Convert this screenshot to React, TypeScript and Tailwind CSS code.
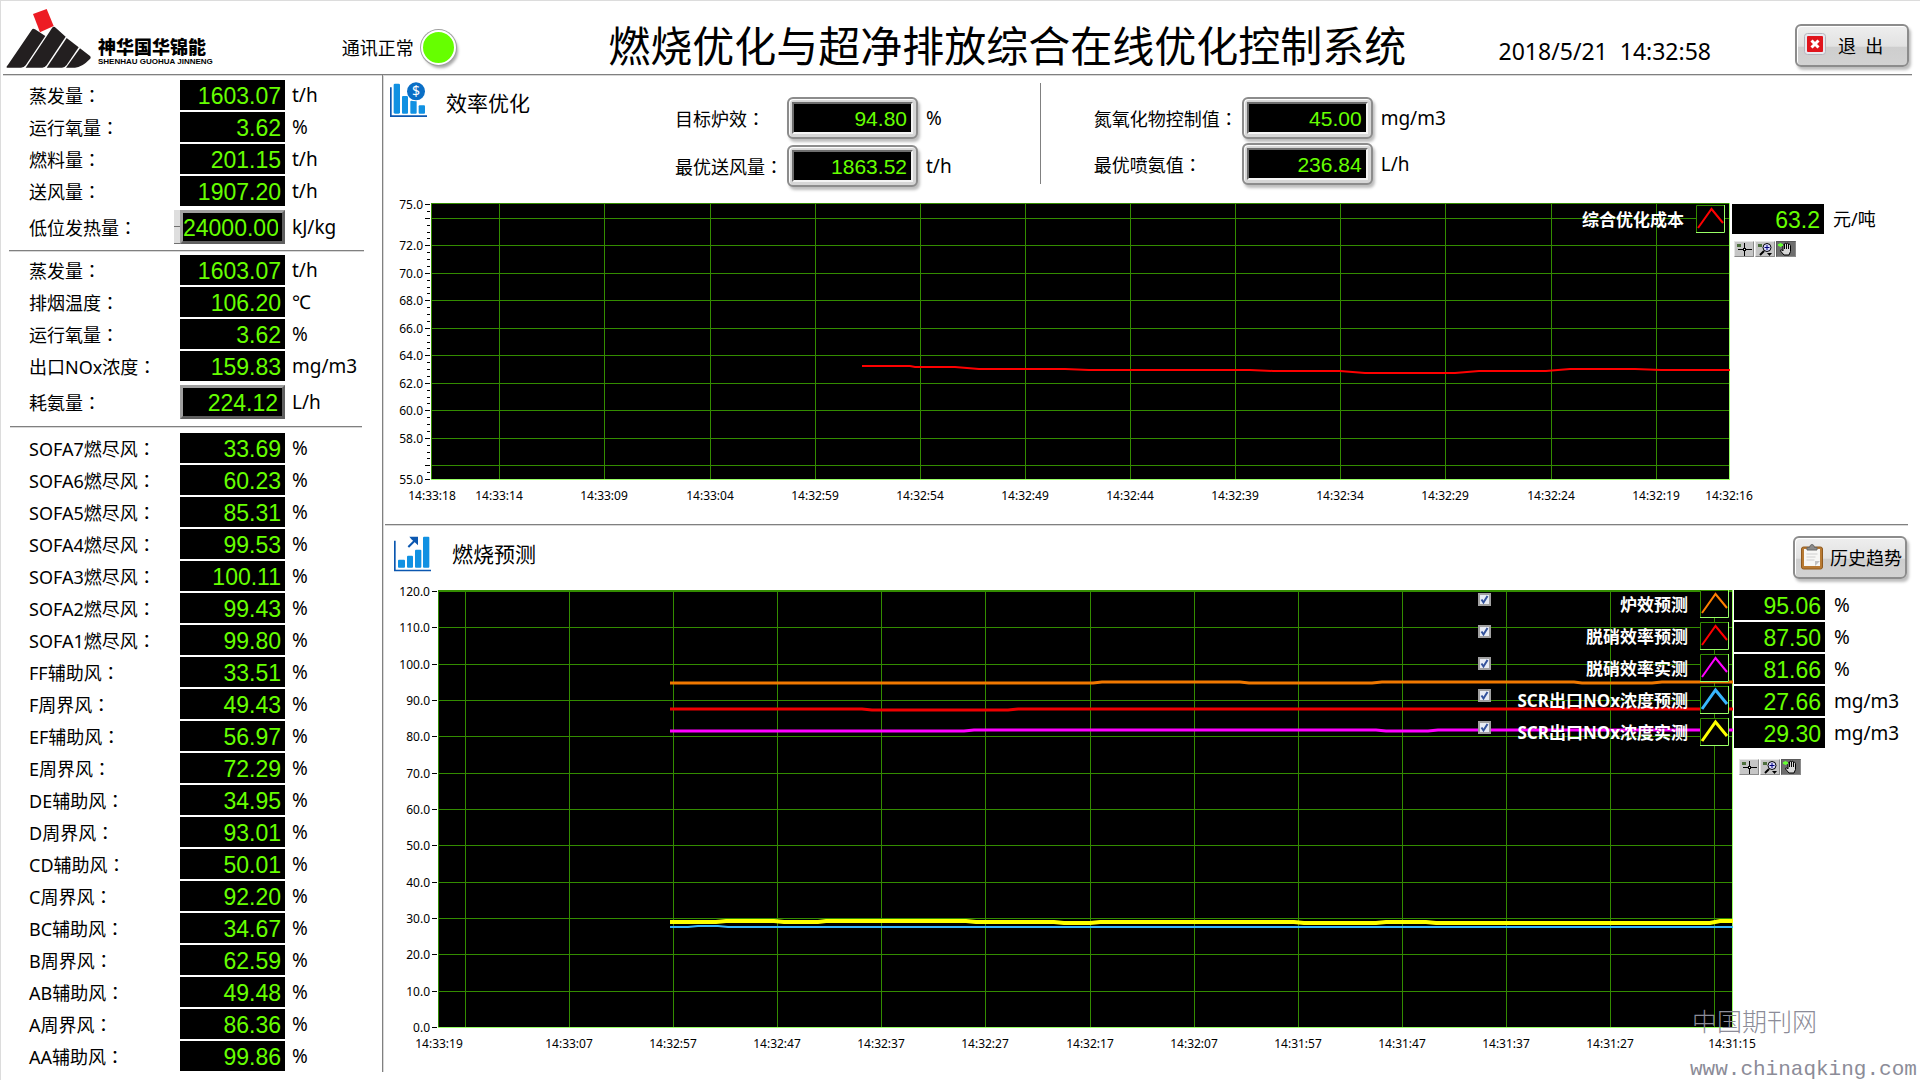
import React from 'react';
import { clsx } from 'clsx';

type Reading = { label: string; value: string; unit: string; editable?: boolean; stepper?: boolean };

type Series = { color: string; width: number; points: string };

const BOILER: Reading[] = [
  { label: '蒸发量', value: '1603.07', unit: 't/h' },
  { label: '运行氧量', value: '3.62', unit: '%' },
  { label: '燃料量', value: '201.15', unit: 't/h' },
  { label: '送风量', value: '1907.20', unit: 't/h' },
  { label: '低位发热量', value: '24000.00', unit: 'kJ/kg', editable: true, stepper: true },
];

const EMISSION: Reading[] = [
  { label: '蒸发量', value: '1603.07', unit: 't/h' },
  { label: '排烟温度', value: '106.20', unit: '℃' },
  { label: '运行氧量', value: '3.62', unit: '%' },
  { label: '出口NOx浓度', value: '159.83', unit: 'mg/m3' },
  { label: '耗氨量', value: '224.12', unit: 'L/h', editable: true },
];

const DAMPERS: Reading[] = [
  ['SOFA7燃尽风', '33.69'],
  ['SOFA6燃尽风', '60.23'],
  ['SOFA5燃尽风', '85.31'],
  ['SOFA4燃尽风', '99.53'],
  ['SOFA3燃尽风', '100.11'],
  ['SOFA2燃尽风', '99.43'],
  ['SOFA1燃尽风', '99.80'],
  ['FF辅助风', '33.51'],
  ['F周界风', '49.43'],
  ['EF辅助风', '56.97'],
  ['E周界风', '72.29'],
  ['DE辅助风', '34.95'],
  ['D周界风', '93.01'],
  ['CD辅助风', '50.01'],
  ['C周界风', '92.20'],
  ['BC辅助风', '34.67'],
  ['B周界风', '62.59'],
  ['AB辅助风', '49.48'],
  ['A周界风', '86.36'],
  ['AA辅助风', '99.86'],
].map(([label, value]) => ({ label, value, unit: '%' }));

const PREDICTIONS = [
  { label: '炉效预测', value: '95.06', unit: '%', color: '#ff8000', thick: 2 },
  { label: '脱硝效率预测', value: '87.50', unit: '%', color: '#ff0000', thick: 2 },
  { label: '脱硝效率实测', value: '81.66', unit: '%', color: '#ff00ff', thick: 2 },
  { label: 'SCR出口NOx浓度预测', value: '27.66', unit: 'mg/m3', color: '#38b6ff', thick: 3 },
  { label: 'SCR出口NOx浓度实测', value: '29.30', unit: 'mg/m3', color: '#ffff00', thick: 3 },
];

const COST_SERIES: Series[] = [
  {
    color: '#ff0000',
    width: 2,
    points:
      '431,163 479,163 484,164 524,164 548,166 634,166 658,167 819,167 842,168 909,168 934,170 1024,170 1048,168 1115,168 1139,166 1204,166 1230,167 1299,167',
  },
];

const PREDICTION_SERIES: Series[] = [
  { color: '#f07800', width: 3, points: '232,93 655,93 664,92 802,92 811,93 934,93 944,92 1136,92 1144,93 1214,93 1224,92 1295,92' },
  { color: '#f00000', width: 3, points: '232,119 424,119 434,120 570,120 580,119 1295,119' },
  { color: '#ff00ff', width: 3, points: '232,141 526,141 536,140 938,140 948,141 990,141 1000,140 1295,140' },
  { color: '#38b6ff', width: 2, points: '232,337 250,337 260,336 280,336 290,337 1295,337' },
  {
    color: '#ffff00',
    width: 4,
    points:
      '232,332 278,332 288,331 336,331 346,332 380,332 388,331 528,331 538,332 616,332 626,333 652,333 662,332 856,332 866,333 938,333 948,332 988,332 998,333 1272,333 1282,331 1295,331',
  },
];

const COST_Y_LABELS = [75, 72, 70, 68, 66, 64, 62, 60, 58, 55];
const COST_Y_GRID = [74, 72, 70, 68, 66, 64, 62, 60, 58, 56];
const COST_X = [
  { at: 1, label: '14:33:18', line: false },
  { at: 68, label: '14:33:14' },
  { at: 173, label: '14:33:09' },
  { at: 279, label: '14:33:04' },
  { at: 384, label: '14:32:59' },
  { at: 489, label: '14:32:54' },
  { at: 594, label: '14:32:49' },
  { at: 699, label: '14:32:44' },
  { at: 804, label: '14:32:39' },
  { at: 909, label: '14:32:34' },
  { at: 1014, label: '14:32:29' },
  { at: 1120, label: '14:32:24' },
  { at: 1225, label: '14:32:19' },
  { at: 1298, label: '14:32:16', line: false },
];

const PREDICTION_Y = [120, 110, 100, 90, 80, 70, 60, 50, 40, 30, 20, 10, 0];
const PREDICTION_X = [
  { at: 1, label: '14:33:19', line: false },
  { at: 27, label: '' },
  { at: 131, label: '14:33:07' },
  { at: 235, label: '14:32:57' },
  { at: 339, label: '14:32:47' },
  { at: 443, label: '14:32:37' },
  { at: 547, label: '14:32:27' },
  { at: 652, label: '14:32:17' },
  { at: 756, label: '14:32:07' },
  { at: 860, label: '14:31:57' },
  { at: 964, label: '14:31:47' },
  { at: 1068, label: '14:31:37' },
  { at: 1172, label: '14:31:27' },
  { at: 1276, label: '' },
  { at: 1294, label: '14:31:15', line: false },
];

function Caption({ text }: { text: string }) {
  return (
    <>
      {text}
      <span className="font-['Noto_Sans_CJK_TC',sans-serif]">：</span>
    </>
  );
}

function Led({ value, className }: { value: string; className?: string }) {
  return (
    <output
      className={clsx(
        "flex h-[30px] items-center justify-end bg-black pr-1 pt-0.5 font-['Liberation_Sans',sans-serif] text-[23px] leading-none text-[#66ff00]",
        className,
      )}
    >
      {value}
    </output>
  );
}

function ReadingRow({ reading, group }: { reading: Reading; group: string }) {
  const id = `${group}-${reading.label}`;
  if (reading.editable) {
    return (
      <div className="mt-0.5 grid h-[34px] grid-cols-[151px_105px_1fr] items-center pl-7">
        <label htmlFor={id}>
          <Caption text={reading.label} />
        </label>
        <div className="relative">
          {reading.stepper && (
            <div className="absolute top-0 right-full flex flex-col">
              <button aria-label="Increase" className="h-[17px] w-1.5 border-b border-[#707070] bg-[#dedede]" />
              <button aria-label="Decrease" className="h-[17px] w-1.5 border-b border-[#707070] bg-[#dedede]" />
            </div>
          )}
          <input
            id={id}
            defaultValue={reading.value}
            className="block h-[34px] w-full border-[3px] border-[#a0a0a0] border-r-[#606060] border-b-[#606060] bg-black pr-1 pt-0.5 text-right font-['Liberation_Sans',sans-serif] text-[23px] leading-none text-[#66ff00] outline-none"
          />
        </div>
        <span className="pl-[7px] text-[19px] leading-none">{reading.unit}</span>
      </div>
    );
  }
  return (
    <div className="grid h-[30px] grid-cols-[151px_105px_1fr] items-center pl-7">
      <span>
        <Caption text={reading.label} />
      </span>
      <Led value={reading.value} />
      <span className="pl-[7px] text-[19px] leading-none">{reading.unit}</span>
    </div>
  );
}

function ReadingGroup({ name, rows, className }: { name: string; rows: Reading[]; className?: string }) {
  return (
    <section className={clsx('flex flex-col gap-0.5', className)}>
      {rows.map((r) => (
        <ReadingRow key={r.label} reading={r} group={name} />
      ))}
    </section>
  );
}

function Rule({ className }: { className?: string }) {
  return <div className={clsx('h-px bg-[#808080] shadow-[0_1px_0_#d8d8d8]', className)} />;
}

function Setpoint({ id, label, value, unit, labelWidth }: { id: string; label: string; value: string; unit: string; labelWidth: string }) {
  return (
    <div className="flex items-center">
      <label htmlFor={id} className={labelWidth}>
        <Caption text={label} />
      </label>
      <div className="rounded-md border-2 border-[#8c8c8c] bg-[#d6d6d6] p-[3px] shadow-[2px_3px_3px_#bdbdbd,inset_1px_1px_1px_#ffffff]">
        <input
          id={id}
          defaultValue={value}
          className="block h-8 w-[121px] border-2 border-[#6e6e6e] border-r-[#f4f4f4] border-b-[#f4f4f4] bg-black pr-1 pt-0.5 text-right font-['Liberation_Sans',sans-serif] text-[21px] leading-none text-[#66ff00] outline-none"
        />
      </div>
      <span className="pl-2 text-[19px] leading-none">{unit}</span>
    </div>
  );
}

type ChartProps = {
  width: number;
  height: number;
  min: number;
  max: number;
  yLabels: number[];
  yGrid: number[];
  yMinor?: number[];
  xTicks: { at: number; label: string; line?: boolean }[];
  series: Series[];
  className: string;
};

function TrendChart({ width, height, min, max, yLabels, yGrid, yMinor = [], xTicks, series, className }: ChartProps) {
  const toY = (v: number) => Math.round(1 + ((max - v) / (max - min)) * (height - 2));
  return (
    <svg className={clsx("block w-full overflow-visible font-['Noto_Sans',sans-serif] text-xs", className)}>
      <svg viewBox={`0 0 ${width} ${height}`} preserveAspectRatio="none" width="100%" height="100%" shapeRendering="crispEdges">
        <rect width={width} height={height} fill="#000" />
        {yGrid.map((v) => (
          <rect key={v} x={0} y={toY(v)} width={width} height={1} fill="#338c00" />
        ))}
        {xTicks.filter((t) => t.line !== false).map((t) => (
          <rect key={t.at} x={t.at} y={0} width={1} height={height} fill="#338c00" />
        ))}
        <path d={`M0 0H${width}V1H1V${height}H0Z`} fill="#338c00" />
        <path d={`M${width} 0V${height}H0V${height - 1}H${width - 1}V0Z`} fill="#99ff66" />
        {series.map((s) => (
          <polyline
            key={s.color}
            points={s.points}
            fill="none"
            stroke={s.color}
            strokeWidth={s.width}
            shapeRendering="auto"
            vectorEffect="non-scaling-stroke"
          />
        ))}
      </svg>
      {yMinor.map((v) => (
        <rect key={v} x={-4} y={toY(v)} width={3} height={1} />
      ))}
      {[...new Set([...yLabels, ...yGrid])].map((v) => (
        <rect key={v} x={-6} y={toY(v)} width={5} height={1} />
      ))}
      {yLabels.map((v) => (
        <text key={v} x={-8} y={toY(v) + 5} textAnchor="end">
          {v.toFixed(1)}
        </text>
      ))}
      {xTicks.filter((t) => t.label).map((t) => (
        <text key={t.at} x={`${(t.at / width) * 100}%`} y={height + 20} textAnchor="middle">
          {t.label}
        </text>
      ))}
    </svg>
  );
}

function PlotSwatch({ color, thick = 2 }: { color: string; thick?: number }) {
  return (
    <svg width="29" height="28" viewBox="0 0 29 28" className="shrink-0">
      <rect width="29" height="28" fill="#000" />
      <path d="M0.500 27V0.500H28" fill="none" stroke="#338c00" />
      <path d="M28.500 0V27.500H0" fill="none" stroke="#99ff66" />
      <path d="M2 23L15.500 4L27 18" fill="none" stroke={color} strokeWidth={thick} />
    </svg>
  );
}

function GraphPalette() {
  const base = 'flex h-4 w-5 items-center justify-center border';
  return (
    <div className="flex gap-px">
      <button aria-label="Cursor" className={clsx(base, 'border-[#e6e6e6] border-r-[#8a8a8a] border-b-[#8a8a8a] bg-[#c6c6c6]')}>
        <svg width="18" height="14" viewBox="0 0 18 14" shapeRendering="crispEdges">
          <rect x="2" y="2" width="4" height="3" fill="#4c6e3c" />
          <path d="M3 7h14v1H3zM9 1h1v13H9z" />
          <rect x="8" y="6" width="3" height="3" />
          <rect x="9" y="7" width="1" height="1" fill="#fff" />
        </svg>
      </button>
      <button aria-label="Zoom" className={clsx(base, 'border-[#e6e6e6] border-r-[#8a8a8a] border-b-[#8a8a8a] bg-[#c6c6c6]')}>
        <svg width="18" height="14" viewBox="0 0 18 14">
          <rect x="2" y="2" width="4" height="3" fill="#4c6e3c" />
          <path d="M8 9L4 13" stroke="#000" strokeWidth="2" />
          <circle cx="11" cy="5.500" r="4" fill="#dcdcff" stroke="#000" />
          <path d="M8.500 5.500h5M11 3v5" stroke="#00007a" />
          <path d="M11 11h5l-2.500 3z" />
        </svg>
      </button>
      <button aria-label="Pan" className={clsx(base, 'border-[#5a5a5a] border-r-[#8a8a8a] border-b-[#8a8a8a] bg-[#6e6e6e]')}>
        <svg width="18" height="14" viewBox="0 0 18 14">
          <path
            d="M7 13L3.500 9C3 8 4.500 7.500 5.500 8.500L6 9V3.500C6 2.500 7.500 2.500 7.500 3.500V2C7.500 1 9.500 1 9.500 2C9.500 1 11.500 1 11.500 2V3C11.500 2 13.500 2 13.500 3.500V9.500L12 13Z"
            fill="#d8d8d8"
            stroke="#000"
          />
          <path d="M7.500 3v4M9.500 2v5M11.500 3v4" stroke="#000" />
          <path d="M1 3h5M3.500 1v4" stroke="#66ff33" strokeWidth="2" />
        </svg>
      </button>
    </div>
  );
}

function CompanyLogo() {
  return (
    <div className="flex items-end gap-[7px] pb-4">
      <svg width="90" height="62" viewBox="0 18 270 186">
        <path d="M96 39L137 24L158 75L117 94Z" fill="#ed1c24" />
        <g fill="#231f20">
          <path d="M17 200Q16 196 20 193L92 87Q96 80 102 85L133 105L74 193Q69 200 60 200Z" />
          <path d="M74 200L136 107L153 81Q158 74 164 80L194 107L137 193Q132 200 124 200Z" />
          <path d="M137 200L197 111L233 139L197 192Q191 200 183 200Z" />
          <path d="M195 200L237 142L266 164Q272 169 266 175Q242 200 222 200Z" />
        </g>
      </svg>
      <div className="flex flex-col pb-0.5 text-black">
        <span className="text-[18px] leading-[20px] font-black">神华国华锦能</span>
        <span className="font-['Liberation_Sans',sans-serif] text-[8px] leading-[10px] font-bold">SHENHAU GUOHUA JINNENG</span>
      </div>
    </div>
  );
}

function CostIcon() {
  return (
    <svg width="38" height="36" viewBox="1170 248 114 108">
      <path d="M1170 264h5v84h106v5h-111z" fill="#0b57b0" />
      <g fill="#1191e2">
        <rect x="1181" y="253" width="19" height="90" rx="4" />
        <rect x="1206" y="290" width="18" height="53" rx="3" />
        <rect x="1231" y="304" width="19" height="39" rx="3" />
        <rect x="1256" y="318" width="19" height="25" rx="3" />
      </g>
      <circle cx="1248" cy="277" r="29" fill="#fff" />
      <circle cx="1248" cy="276" r="27" fill="#0a6fc6" />
      <text x="1248" y="291" textAnchor="middle" fontSize="42" fill="#fff" className="font-['Noto_Sans',sans-serif]">
        $
      </text>
    </svg>
  );
}

function ForecastIcon() {
  return (
    <svg width="38" height="36" viewBox="42 286 114 108">
      <path d="M42 300h5v87h106v5H42z" fill="#0b57b0" />
      <g fill="#1191e2">
        <rect x="54" y="357" width="21" height="24" rx="3" />
        <rect x="81" y="345" width="18" height="36" rx="3" />
        <rect x="105" y="327" width="19" height="54" rx="3" />
        <rect x="129" y="288" width="19" height="93" rx="3" />
      </g>
      <path d="M85 319L106 298" stroke="#0b57b0" strokeWidth="6" />
      <path d="M88 288h26v26l-8-8-12-10z" fill="#0b57b0" />
    </svg>
  );
}

function MetalButton({ children, className }: { children: React.ReactNode; className?: string }) {
  return (
    <button
      className={clsx(
        'flex h-[43px] w-[114px] shrink-0 items-center rounded-md border-2 border-[#8c8c8c] bg-[linear-gradient(#eeeeee,#e2e2e2_52%,#cecece_54%,#d2d2d2)] text-[18px] whitespace-pre shadow-[2px_3px_3px_#bdbdbd,inset_1px_1px_0_#ffffff]',
        className,
      )}
    >
      {children}
    </button>
  );
}

export default function App() {
  return (
    <div className="relative flex min-h-screen flex-col overflow-hidden border-t border-l border-[#dcdcdc] bg-white font-['Noto_Sans','Noto_Sans_CJK_SC',sans-serif] text-[18px] leading-none text-black">
      <header className="flex h-[73px] items-center pt-4 pr-[11px]">
        <CompanyLogo />
        <div className="ml-[129px] flex items-center gap-[7px] pt-1">
          <span>通讯正常</span>
          <span className="size-[35px] rounded-full border-2 border-white bg-[#66ff00] shadow-[0_0_0_1px_#a0a0a0,2px_3px_3px_#a8a8a8]" />
        </div>
        <h1 className="flex-1 pl-15 text-center text-[42px] whitespace-nowrap">燃烧优化与超净排放综合在线优化控制系统</h1>
        <time className="pt-3 text-[23px] whitespace-pre">2018/5/21  14:32:58</time>
        <MetalButton className="ml-[84px]">
          <svg width="22" height="22" viewBox="0 0 22 22" className="mr-3 mb-1 ml-[7px]">
            <rect x="0.500" y="0.500" width="21" height="21" rx="3" fill="#e8e8ee" stroke="#b4b4bc" />
            <rect x="3" y="3" width="16" height="16" rx="1" fill="#e0141c" />
            <path d="M7.500 7.500L14.500 14.500M14.500 7.500L7.500 14.500" stroke="#fff" strokeWidth="3" />
          </svg>
          <span>退  出</span>
        </MetalButton>
      </header>
      <Rule className="mr-2 ml-0.5" />

      <div className="flex flex-1">
        <div className="mb-2 w-[382px] shrink-0 border-r border-[#808080] shadow-[1px_0_0_#d8d8d8]">
          <ReadingGroup name="boiler" rows={BOILER} className="pt-[5px]" />
          <Rule className="mt-1.5 mr-[18px] ml-2" />
          <ReadingGroup name="emission" rows={EMISSION} className="pt-1" />
          <Rule className="mt-[7px] mr-5 ml-[9px]" />
          <ReadingGroup name="damper" rows={DAMPERS} className="pt-1.5" />
        </div>

        <main className="min-w-0 flex-1 pl-0.5">
          <section>
            <div className="flex h-32 items-start">
              <div className="flex w-[286px] items-center gap-[18px] pt-[7px] pl-[5px]">
                <CostIcon />
                <h2 className="pt-1.5 text-[21px]">效率优化</h2>
              </div>
              <div className="flex flex-col gap-1.5 pt-[22px] pl-1">
                <Setpoint id="target-eff" label="目标炉效" value="94.80" unit="%" labelWidth="w-28" />
                <Setpoint id="best-air" label="最优送风量" value="1863.52" unit="t/h" labelWidth="w-28" />
              </div>
              <div className="mt-2 ml-[88px] h-[101px] w-px bg-[#808080]" />
              <div className="flex flex-col gap-1 pt-[22px] pl-[53px]">
                <Setpoint id="nox-limit" label="氮氧化物控制值" value="45.00" unit="mg/m3" labelWidth="w-[148px]" />
                <Setpoint id="best-nh3" label="最优喷氨值" value="236.84" unit="L/h" labelWidth="w-[148px]" />
              </div>
            </div>
            <div className="flex pl-[46px]">
              <div className="relative min-w-0 flex-1">
                <TrendChart
                  className="h-[277px]"
                  width={1299}
                  height={277}
                  min={55}
                  max={75}
                  yLabels={COST_Y_LABELS}
                  yGrid={COST_Y_GRID}
                  yMinor={Array.from({ length: 41 }, (_, i) => 55 + i / 2)}
                  xTicks={COST_X}
                  series={COST_SERIES}
                />
                <div className="absolute top-0.5 right-[5px] flex items-center gap-3 text-[17px] font-bold text-white">
                  <span>综合优化成本</span>
                  <PlotSwatch color="#ff0000" />
                </div>
              </div>
              <div className="w-[190px] pt-px pl-0.5">
                <div className="flex items-center gap-[9px]">
                  <Led value="63.2" className="w-[92px]" />
                  <span>元/吨</span>
                </div>
                <div className="pt-[7px] pl-0.5">
                  <GraphPalette />
                </div>
              </div>
            </div>
          </section>

          <Rule className="mt-11 mr-3" />

          <section>
            <div className="flex h-[65px] items-start justify-between pr-[13px]">
              <div className="flex items-center gap-5 pt-[11px] pl-[9px]">
                <ForecastIcon />
                <h2 className="text-[21px]">燃烧预测</h2>
              </div>
              <MetalButton className="mt-[11px]">
                <svg width="22" height="26" viewBox="0 0 22 26" className="mr-[7px] mb-0.5 ml-1.5 shrink-0">
                  <rect x="0.500" y="3" width="21" height="22" rx="2" fill="#b87a33" stroke="#8f5a20" />
                  <path d="M3 5h16v17H3z" fill="#f7f7f5" />
                  <path d="M14 22v-5h5z" fill="#c2c2c2" />
                  <path d="M5.500 10h11M5.500 13h9M5.500 16h8" stroke="#cfcfcf" />
                  <path d="M6 6V3.500h2.500Q9 0.500 11 0.500Q13 0.500 13.500 3.500H16V6Z" fill="#8c8c8c" stroke="#6a6a6a" />
                </svg>
                <span>历史趋势</span>
              </MetalButton>
            </div>
            <div className="flex pl-[53px]">
              <div className="relative min-w-0 flex-1">
                <TrendChart
                  className="h-[438px]"
                  width={1295}
                  height={438}
                  min={0}
                  max={120}
                  yLabels={PREDICTION_Y}
                  yGrid={PREDICTION_Y}
                  xTicks={PREDICTION_X}
                  series={PREDICTION_SERIES}
                />
                <div className="absolute top-0 right-1 flex w-[251px] flex-col gap-1 text-[17px] font-bold text-white">
                  {PREDICTIONS.map((p) => (
                    <label key={p.label} className="flex h-7 items-center">
                      <span className="relative mb-2.5 size-[13px] shrink-0">
                        <input
                          type="checkbox"
                          defaultChecked
                          className="peer block size-[13px] appearance-none border-2 border-[#a0a0a0] bg-[#e8ecf4]"
                        />
                        <svg
                          viewBox="0 0 13 13"
                          className="pointer-events-none absolute inset-0 hidden size-[13px] peer-checked:block"
                        >
                          <path d="M3.500 6.500L5.500 9.500L9.500 3" fill="none" stroke="#34539c" strokeWidth="2" />
                        </svg>
                      </span>
                      <span className="flex-1 pr-3 text-right whitespace-nowrap">{p.label}</span>
                      <PlotSwatch color={p.color} thick={p.thick} />
                    </label>
                  ))}
                </div>
              </div>
              <div className="w-[187px] pl-px">
                <div className="flex flex-col gap-0.5">
                  {PREDICTIONS.map((p) => (
                    <div key={p.label} className="flex items-center gap-[9px]">
                      <Led value={p.value} className="w-[91px]" />
                      <span className="text-[19px]">{p.unit}</span>
                    </div>
                  ))}
                </div>
                <div className="pt-[11px] pl-[5px]">
                  <GraphPalette />
                </div>
              </div>
            </div>
          </section>
        </main>
      </div>

      <div className="absolute right-0 bottom-0 w-[230px] text-[#8c8c98]">
        <p className="mb-[26px] pl-0.5 text-[25px] font-light">中国期刊网</p>
        <p className="font-['Liberation_Mono',monospace] text-[21px] leading-5 whitespace-nowrap">www.chinaqking.com</p>
      </div>
    </div>
  );
}
